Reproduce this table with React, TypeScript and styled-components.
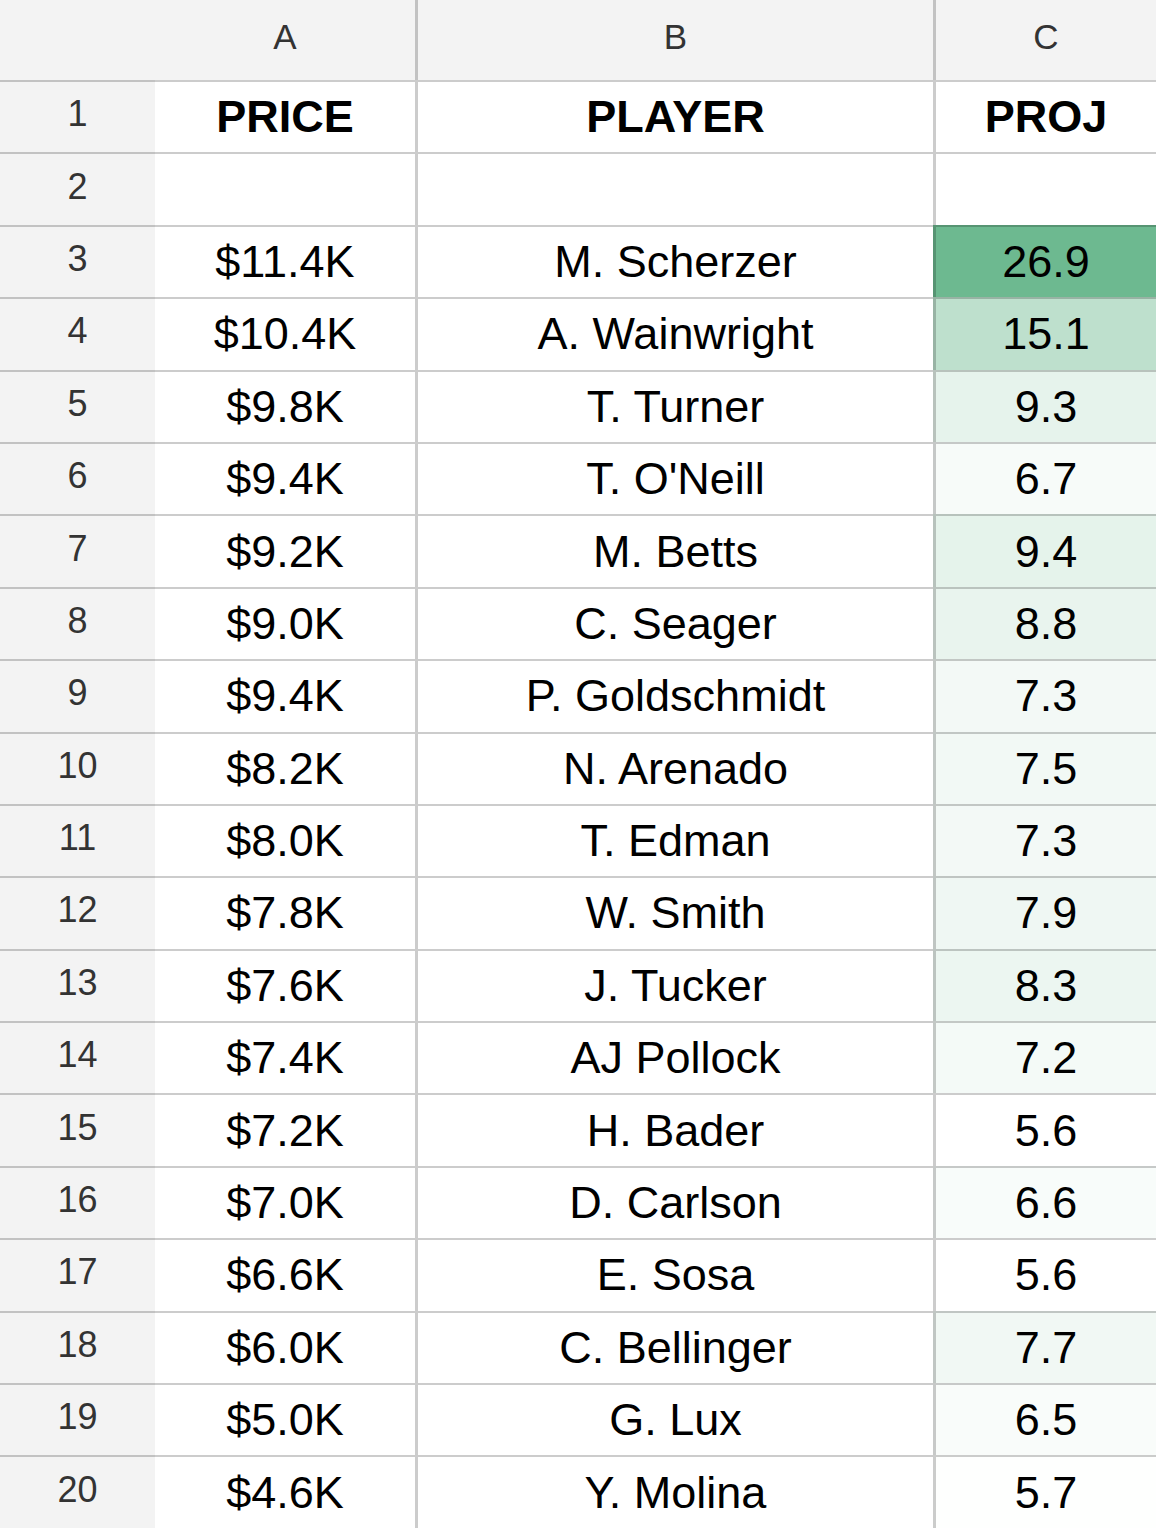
import React from 'react';
import styled, { createGlobalStyle } from 'styled-components';

const GlobalStyle = createGlobalStyle`
  html, body {
    margin: 0;
    padding: 0;
    background: #ffffff;
    overflow: hidden;
  }
  body {
    font-family: "Liberation Sans", Arial, sans-serif;
  }
`;

const Sheet = styled.div`
  display: grid;
  grid-template-columns: 155px 260px 518px 1fr;
  grid-template-rows: 80px repeat(20, 72.4px);
  width: 1156px;
  height: 1528px;
`;

const ColHead = styled.div<{ $divider?: boolean }>`
  display: flex;
  align-items: center;
  justify-content: center;
  box-sizing: border-box;
  background: #f3f3f3;
  color: #333333;
  font-size: 35px;
  border-left: ${({ $divider }) => ($divider ? '3px solid rgba(0, 0, 0, 0.2)' : 'none')};
  padding-bottom: 6px;
`;

const RowHead = styled.div`
  display: flex;
  align-items: center;
  justify-content: center;
  box-sizing: border-box;
  background: #f3f3f3;
  color: #333333;
  font-size: 36px;
  border-top: 2.5px solid rgba(0, 0, 0, 0.2);
  padding-bottom: 6px;

  &:first-of-type {
    border-top-width: 2px;
  }
`;

const Cell = styled.div<{ $divider?: boolean; $bold?: boolean }>`
  display: flex;
  align-items: center;
  justify-content: center;
  box-sizing: border-box;
  color: #000000;
  font-size: 45px;
  font-weight: ${({ $bold }) => ($bold ? 700 : 400)};
  border-top: 2.5px solid rgba(0, 0, 0, 0.2);
  border-left: ${({ $divider }) => ($divider ? '3px solid rgba(0, 0, 0, 0.2)' : 'none')};
  white-space: nowrap;
`;

type Row = { price: string; player: string; proj: number | null };

const rows: Row[] = [
  { price: '', player: '', proj: null },
  { price: '$11.4K', player: 'M. Scherzer', proj: 26.9 },
  { price: '$10.4K', player: 'A. Wainwright', proj: 15.1 },
  { price: '$9.8K', player: 'T. Turner', proj: 9.3 },
  { price: '$9.4K', player: "T. O'Neill", proj: 6.7 },
  { price: '$9.2K', player: 'M. Betts', proj: 9.4 },
  { price: '$9.0K', player: 'C. Seager', proj: 8.8 },
  { price: '$9.4K', player: 'P. Goldschmidt', proj: 7.3 },
  { price: '$8.2K', player: 'N. Arenado', proj: 7.5 },
  { price: '$8.0K', player: 'T. Edman', proj: 7.3 },
  { price: '$7.8K', player: 'W. Smith', proj: 7.9 },
  { price: '$7.6K', player: 'J. Tucker', proj: 8.3 },
  { price: '$7.4K', player: 'AJ Pollock', proj: 7.2 },
  { price: '$7.2K', player: 'H. Bader', proj: 5.6 },
  { price: '$7.0K', player: 'D. Carlson', proj: 6.6 },
  { price: '$6.6K', player: 'E. Sosa', proj: 5.6 },
  { price: '$6.0K', player: 'C. Bellinger', proj: 7.7 },
  { price: '$5.0K', player: 'G. Lux', proj: 6.5 },
  { price: '$4.6K', player: 'Y. Molina', proj: 5.7 },
];

const projValues = rows.map((r) => r.proj).filter((v): v is number => v !== null);
const minProj = Math.min(...projValues);
const maxProj = Math.max(...projValues);

// white -> green colour scale, like the sheet's conditional format
const scale = (v: number | null) => {
  if (v === null) return '#ffffff';
  const t = (v - minProj) / (maxProj - minProj);
  const mix = (to: number) => Math.round(255 - (255 - to) * t);
  return `rgb(${mix(109)}, ${mix(185)}, ${mix(144)})`;
};

const App: React.FC = () => {
  return (
    <>
      <GlobalStyle />
      <Sheet>
        <ColHead />
        <ColHead>A</ColHead>
        <ColHead $divider>B</ColHead>
        <ColHead $divider>C</ColHead>

        <RowHead>1</RowHead>
        <Cell $bold>PRICE</Cell>
        <Cell $bold $divider>PLAYER</Cell>
        <Cell $bold $divider>PROJ</Cell>

        {rows.map((r, i) => (
          <React.Fragment key={i}>
            <RowHead>{i + 2}</RowHead>
            <Cell>{r.price}</Cell>
            <Cell $divider>{r.player}</Cell>
            <Cell $divider style={{ background: scale(r.proj) }}>
              {r.proj === null ? '' : r.proj.toFixed(1)}
            </Cell>
          </React.Fragment>
        ))}
      </Sheet>
    </>
  );
};

export default App;
